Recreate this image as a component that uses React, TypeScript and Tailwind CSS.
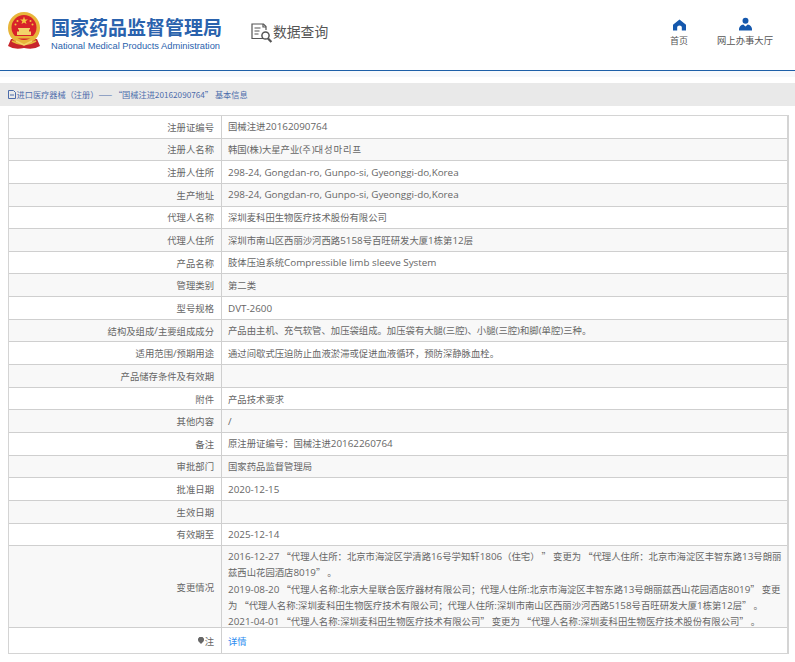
import React from 'react';

const rows: [string, string][] = [
  ['注册证编号', '国械注进20162090764'],
  ['注册人名称', '韩国(株)大星产业(주)대성마리프'],
  ['注册人住所', '298-24, Gongdan-ro, Gunpo-si, Gyeonggi-do,Korea'],
  ['生产地址', '298-24, Gongdan-ro, Gunpo-si, Gyeonggi-do,Korea'],
  ['代理人名称', '深圳麦科田生物医疗技术股份有限公司'],
  ['代理人住所', '深圳市南山区西丽沙河西路5158号百旺研发大厦1栋第12层'],
  ['产品名称', '肢体压迫系统Compressible limb sleeve System'],
  ['管理类别', '第二类'],
  ['型号规格', 'DVT-2600'],
  ['结构及组成/主要组成成分', '产品由主机、充气软管、加压袋组成。加压袋有大腿(三腔)、小腿(三腔)和脚(单腔)三种。'],
  ['适用范围/预期用途', '通过间歇式压迫防止血液淤滞或促进血液循环，预防深静脉血栓。'],
  ['产品储存条件及有效期', ''],
  ['附件', '产品技术要求'],
  ['其他内容', '/'],
  ['备注', '原注册证编号：国械注进20162260764'],
  ['审批部门', '国家药品监督管理局'],
  ['批准日期', '2020-12-15'],
  ['生效日期', ''],
  ['有效期至', '2025-12-14'],
];

const changes = [
  '2016-12-27 “代理人住所：北京市海淀区学清路16号学知轩1806（住宅）\u00a0” 变更为 “代理人住所：北京市海淀区丰智东路13号朗丽',
  '兹西山花园酒店8019” 。',
  '2019-08-20 “代理人名称:北京大星联合医疗器材有限公司；代理人住所:北京市海淀区丰智东路13号朗丽兹西山花园酒店8019” 变更',
  '为 “代理人名称:深圳麦科田生物医疗技术有限公司；代理人住所:深圳市南山区西丽沙河西路5158号百旺研发大厦1栋第12层” 。',
  '2021-04-01 “代理人名称:深圳麦科田生物医疗技术有限公司” 变更为 “代理人名称:深圳麦科田生物医疗技术股份有限公司” 。',
];

// 拉丁字符比中文略大，单独包一层
const Mixed = ({ text }: { text: string }) => (
  <>
    {text.split(/([\x21-\x7e]+(?: [\x21-\x7e]+)*|[\uac00-\ud7a3]+)/).map((part, i) => {
      if (/^[\uac00-\ud7a3]/.test(part)) return <span key={i} className="tracking-[0.9px]">{part}</span>;
      if (/^[\x21-\x7e]/.test(part)) return <span key={i} className="font-['Open_Sans',sans-serif] text-[9.85px]">{part}</span>;
      return part;
    })}
  </>
);

const Emblem = () => (
  <svg width="36" height="38" viewBox="0 0 36 38">
    <path d="M5 27 L2 34 Q8 38 18 36 Q28 38 34 34 L31 27 Z" fill="#c8242b" />
    <path d="M6 29 Q18 36 30 29" fill="none" stroke="#e9b93a" strokeWidth="2" />
    <circle cx="18" cy="16" r="16" fill="#e8b53a" />
    <circle cx="18" cy="15.5" r="12.5" fill="#d8222a" />
    <polygon points="18,4.5 19,7.5 22,7.5 19.6,9.3 20.5,12 18,10.4 15.5,12 16.4,9.3 14,7.5 17,7.5" fill="#f3c63f" />
    <circle cx="11.5" cy="9" r="1" fill="#f3c63f" />
    <circle cx="24.5" cy="9" r="1" fill="#f3c63f" />
    <circle cx="9.5" cy="12.5" r="1" fill="#f3c63f" />
    <circle cx="26.5" cy="12.5" r="1" fill="#f3c63f" />
    <path d="M12 16h12v1.6h-1v2h2v3.4H11V19.6h2v-2h-1z" fill="#f3d36a" />
    <path d="M8 24h20v2.5H8z" fill="#e8b53a" />
    <path d="M10 29l8 4 8-4" fill="none" stroke="#f3d36a" strokeWidth="1.4" />
  </svg>
);

const SearchDoc = () => (
  <svg width="22" height="21" viewBox="0 0 22 21" fill="none" stroke="#555" strokeWidth="1.2">
    <path d="M13 15.5H1V1h11.5l2.5 2.5V7" />
    <path d="M12 1v3h3" />
    <path d="M3.5 5h6M3.5 8h5M3.5 11h4" />
    <circle cx="14.5" cy="12.5" r="3.6" strokeWidth="1.5" />
    <path d="M17 15.5l3.4 3.6" strokeWidth="2.2" />
  </svg>
);

const HomeIcon = () => (
  <svg width="13" height="12" viewBox="0 0 14 12" fill="#1558ad">
    <path d="M7 0 L14 5.6 V12 H9.5 V8.4 Q9.5 6.6 7 6.6 Q4.5 6.6 4.5 8.4 V12 H0 V5.6 Z" />
  </svg>
);

const PersonIcon = () => (
  <svg width="13" height="14" viewBox="0 0 14 14" fill="#1558ad">
    <circle cx="7" cy="3.4" r="3.2" />
    <path d="M0 14 V12 Q0.6 8.6 4.6 7.6 L7 9.8 L9.4 7.6 Q13.4 8.6 14 12 V14 Z" />
  </svg>
);

const Row = ({ label, even, h, children }: { label: React.ReactNode; even: boolean; h: string; children: React.ReactNode }) => (
  <div className={`flex border-b border-[#cfcfcf] ${h} ${even ? 'bg-[#f8f8f8]' : 'bg-white'}`}>
    <div className="w-[213px] shrink-0 flex items-center justify-end pr-[7px] border-r border-[#cfcfcf]">{label}</div>
    <div className="flex-1 min-w-0 flex flex-col justify-center pl-[6px] whitespace-nowrap">{children}</div>
  </div>
);

export default function App() {
  return (
    <div className="w-[795px] h-[662px] overflow-hidden bg-white text-[9.35px] text-[#666] font-['Noto_Sans_CJK_SC','Noto_Sans_CJK_KR',sans-serif]">
      {/* 顶部 */}
      <header className="h-[71px] border-b-[1.5px] border-[#1d5fa8] flex items-start">
        <div className="ml-[6px] mt-[12px]"><Emblem /></div>
        <div className="ml-[9px] mt-[14px] w-[180px]">
          <div className="text-[19px] leading-[25px] font-bold text-[#2a62ad] whitespace-nowrap">国家药品监督管理局</div>
          <div className="text-[9.3px] leading-[12px] mt-[1px] text-[#2a62ad] whitespace-nowrap font-['Liberation_Sans',sans-serif]">National Medical Products Administration</div>
        </div>
        <div className="ml-[20px] mt-[23px]"><SearchDoc /></div>
        <div className="mt-[20px] text-[13.8px] leading-[22px] text-[#555] whitespace-nowrap">数据查询</div>
        <div className="ml-auto mt-[19px] flex">
          <div className="w-[40px] flex flex-col items-center">
            <HomeIcon />
            <span className="mt-[3px] text-[9px] leading-[13px] text-[#555]">首页</span>
          </div>
          <div className="ml-[10px] mr-[14px] w-[72px] flex flex-col items-center -mt-[2px]">
            <PersonIcon />
            <span className="mt-[3px] text-[9.35px] leading-[13px] text-[#555] whitespace-nowrap">网上办事大厅</span>
          </div>
        </div>
      </header>
      <div className="h-[6px] bg-[#f7f9fc]" />

      {/* 面包屑 */}
      <div className="mt-[6px] h-[23px] bg-[#e9e9e9] flex items-center pl-[8px] text-[8.2px] text-[#4d6cab] whitespace-nowrap">
        <svg width="8" height="9" viewBox="0 0 8 9" fill="none" stroke="#4d6cab" className="mr-[0.5px]">
          <path d="M.5.5h5l2 2v6h-7zM2 5h4" />
        </svg>
        进口医疗器械（注册）—— “国械注进20162090764” 基本信息
      </div>

      {/* 详情表 */}
      <div className="mt-[9px] mx-[8px] w-[781px] border-t border-l border-r-2 border-b border-[#d4d4d4]">
        {rows.map(([label, value], i) => (
          <Row key={label} label={<Mixed text={label} />} even={i % 2 === 1} h="h-[22.65px]"><div><Mixed text={value} /></div></Row>
        ))}
        <Row label="变更情况" even h="h-[82px]">
          {changes.map((line) => (
            <div key={line} className="leading-[16.2px] translate-y-[2px]"><Mixed text={line} /></div>
          ))}
        </Row>
        <Row
          label={
            <span className="flex items-center">
              <svg width="6" height="7" viewBox="0 0 6 7" fill="#666" className="mr-[1px]"><path d="M3 7 L.6 4.4 A3 3 0 1 1 5.4 4.4 Z" /></svg>
              注
            </span>
          }
          even={false}
          h="h-[25px] border-b-0"
        >
          <a href="#" className="text-[#2d8cf0]">详情</a>
        </Row>
      </div>
    </div>
  );
}
